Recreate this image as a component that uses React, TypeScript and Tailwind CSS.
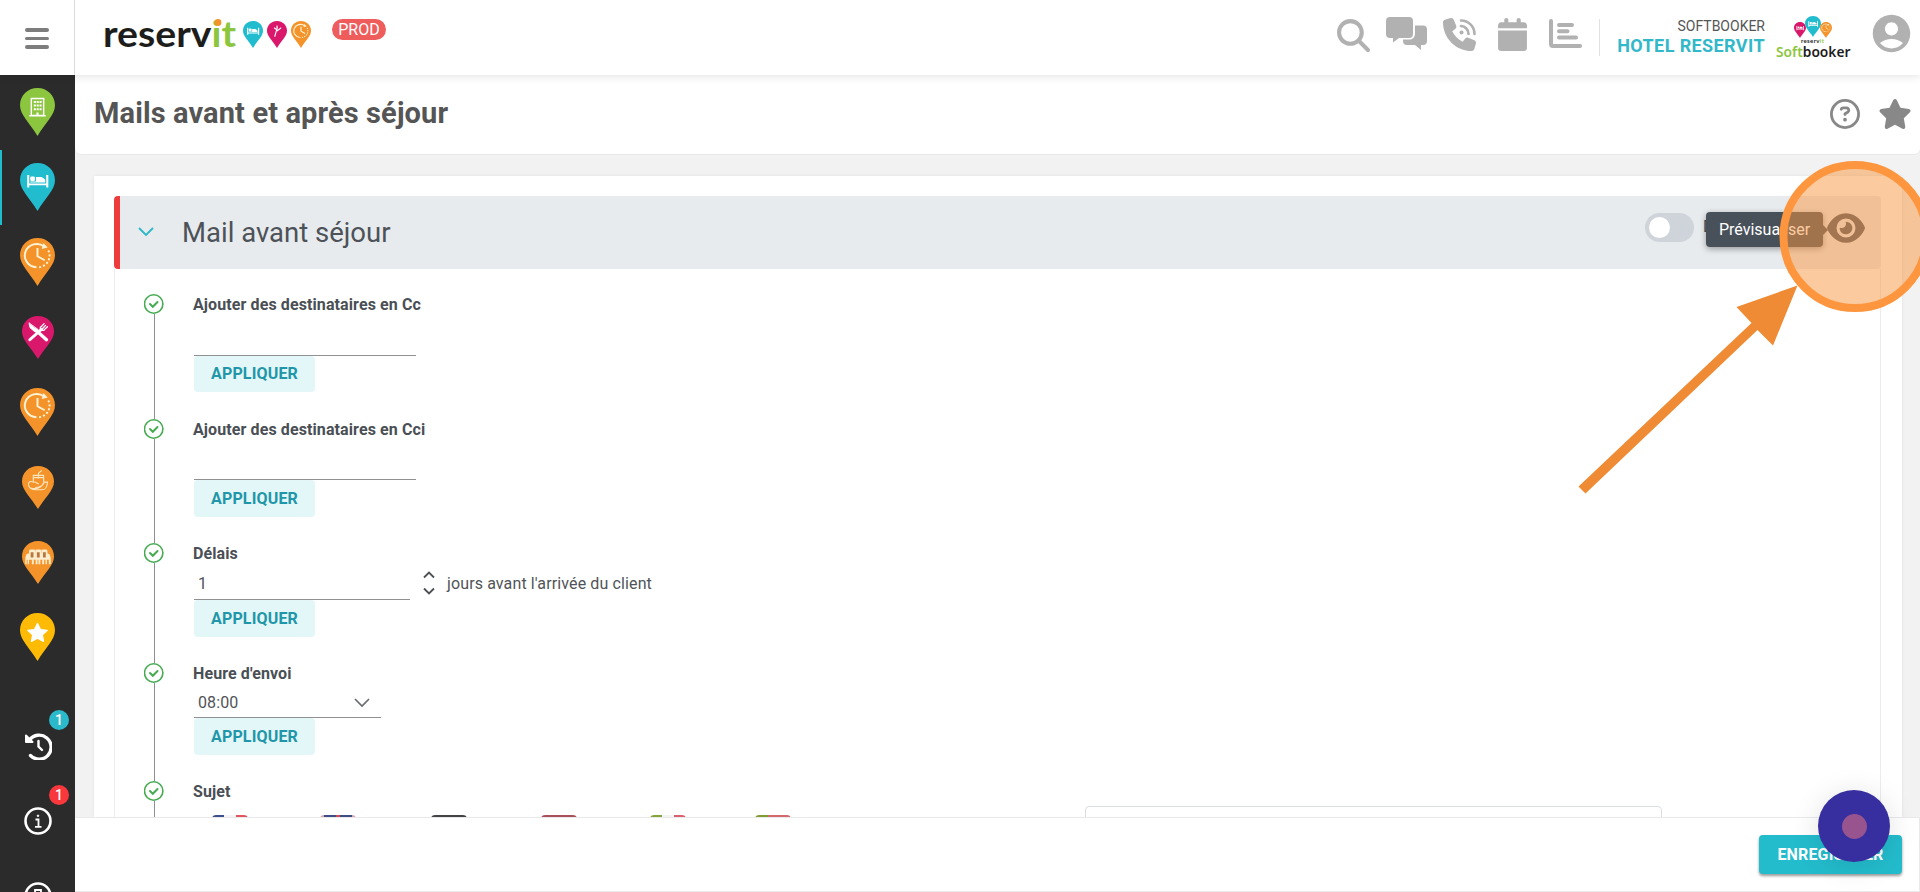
import { ReactNode } from 'react'
import { FaMagnifyingGlass, FaPhone, FaCalendar, FaRegCircleQuestion, FaStar, FaEye } from 'react-icons/fa6'
import { MdAccountCircle } from 'react-icons/md'

const TEAL = '#22bccf'
const ORANGE = '#f3932a'
const PINK = '#d9176b'

// ---------- glyphs drawn inside the pins (34 x 48 box) ----------
const Building = () => (
  <g fill="none" stroke="#fff" strokeWidth="1.4">
    <path d="M11 10.5h12v17H11zM9 27.8h16" />
    <path d="M13.4 14h2M16.2 14h2M19 14h2M13.4 17.6h2M16.2 17.6h2M19 17.6h2M13.4 21.2h2M16.2 21.2h2M19 21.2h2" strokeWidth="2" />
    <path d="M17 24.5v3" strokeWidth="2" />
  </g>
)

const Bed = () => (
  <g fill="#fff">
    <path d="M7 12h2v8.600h16.500V12h2v12.500h-2v-2.200H9v2.200H7z" />
    <rect x="10" y="13.500" width="4.500" height="4.500" rx="1.200" />
    <path d="M15.500 14h5.500l3.500 2.500v3H10v-1h5.500z" />
  </g>
)

const Clock = () => (
  <g fill="none" stroke="#fff3d6" strokeWidth="1.9">
    <path d="M16 29.200A11.600 11.600 0 1 1 23.500 8.500" />
    <path d="M23 6l3 3.200-4.200 1z" fill="#fff3d6" strokeWidth="1" />
    <path d="M27.500 12.500A11.600 11.600 0 0 1 18 29.300" strokeDasharray="2 2" />
    <path d="M17 10v8.200l7 4" />
  </g>
)

const Cutlery = () => (
  <g stroke="#fff" strokeLinecap="round" fill="none">
    <path d="M7.500 8l1 5 5.500 5 3-2.500z" fill="#fff" strokeWidth="1" />
    <path d="M15 16l11 10.500" strokeWidth="3.600" />
    <path d="M8.300 26.500L20.500 15" strokeWidth="3.200" />
    <path d="M19.500 13l4-4.500M21.500 14.500l3.500-4M23 16l4-4M19.500 12.500v3.500h4" strokeWidth="1.400" />
  </g>
)

const Breakfast = () => (
  <g fill="none" stroke="#ffe6bf" strokeWidth="1.200">
    <path d="M12 18v-7.500h11V18M12 13h11M17.500 14V8l3.500-3" />
    <path d="M12 18c-5-2.500-6 2-4.500 5s4 3.500 6.500 3.500h7c4 0 6-4 6-8.500l-3 0c-2 4-5 6-10 6M9 24.500c6 2 12 0 14-6M12 18c3-1 4 2 6 2" />
  </g>
)

const Meeting = () => (
  <g fill="#ffeccc">
    <rect x="7.500" y="9.500" width="6.500" height="7" rx="1.500" />
    <rect x="14" y="9.500" width="6.500" height="7" rx="1.500" />
    <rect x="20.500" y="9.500" width="6.500" height="7" rx="1.500" />
    <path d="M4.500 15l2-1h21l2 1 1 4v7h-2v-5h-2v5h-1.500v-5h-1.500v5h-2v-5h-2v5h-2v-5h-1v5h-2v-5h-2v5h-2v-5H7.500v5H6v-5H5v5H3.500v-7z" />
    <path d="M9.200 12.500h3v6h-3zM15.800 12.500h3v6h-3zM22.300 12.500h3v6h-3z" fill="#b5793f" />
  </g>
)

const WhiteStar = () => (
  <path
    d="M17 10.500l2.900 6 6.600.8-4.800 4.600 1.200 6.500L17 25.200l-5.900 3.200 1.200-6.500-4.800-4.600 6.600-.8z"
    fill="#fff"
    stroke="#fff"
    strokeWidth="1.200"
    strokeLinejoin="round"
  />
)

function Pin({ color, className, children }: { color: string; className: string; children?: ReactNode }) {
  return (
    <svg viewBox="0 0 34 48" preserveAspectRatio="none" className={className}>
      <path d="M17 0C7.400 0 0 7.600 0 17.200 0 27 9 34 17 48 25 34 34 27 34 17.200 34 7.600 26.600 0 17 0z" fill={color} />
      {children}
    </svg>
  )
}

const menu = [
  { color: '#8cc63f', icon: <Building />, big: true },
  { color: TEAL, icon: <Bed />, big: true, active: true },
  { color: ORANGE, icon: <Clock />, big: true },
  { color: PINK, icon: <Cutlery />, big: false },
  { color: ORANGE, icon: <Clock />, big: true },
  { color: ORANGE, icon: <Breakfast />, big: false },
  { color: ORANGE, icon: <Meeting />, big: false },
  { color: '#fdbb05', icon: <WhiteStar />, big: true },
]

function Sidebar() {
  return (
    <nav className="w-[75px] shrink-0 bg-[#2b2b2b] overflow-hidden">
      {menu.map((m, i) => (
        <div
          key={i}
          className={`h-[75px] flex justify-center border-l-2 pr-[2px] ${m.active ? 'border-[#22bccf]' : 'border-transparent'} ${m.big ? 'pt-[13px]' : 'pt-[16px]'}`}
        >
          <Pin color={m.color} className={m.big ? 'w-[35px] h-12' : 'w-8 h-[43px]'}>{m.icon}</Pin>
        </div>
      ))}

      <div className="mt-[34px] h-[75px] relative">
        <svg viewBox="0 0 28 28" className="w-7 h-7 ml-[24px] mt-[23px] absolute" fill="none" stroke="#fff" strokeWidth="3.400" strokeLinecap="round">
          <path d="M5.500 8A12 12 0 1 1 6.500 23.500" />
          <path d="M2 3.500v6.500h6.500z" fill="#fff" strokeWidth="2" strokeLinejoin="round" />
          <path d="M14.500 9v5.500l3.500 3.500" strokeWidth="2.400" />
        </svg>
        <Badge className="bg-[#2bb9cc]" />
      </div>
      <div className="h-[75px] relative">
        <svg viewBox="0 0 28 28" className="w-7 h-7 ml-[24px] mt-[23px] absolute" fill="none" stroke="#fff" strokeWidth="2.600">
          <circle cx="14" cy="14" r="12.500" />
          <path d="M11.500 12.500h3v7M11 19.800h6.500" strokeWidth="1.800" />
          <circle cx="14" cy="8.800" r=".8" fill="#fff" strokeWidth="1" />
        </svg>
        <Badge className="bg-[#f8383c]" />
      </div>
      <svg viewBox="0 0 28 28" className="w-7 h-7 ml-[24px] mt-[23px]" fill="none" stroke="#fff" strokeWidth="2.600">
        <circle cx="14" cy="14" r="12.500" />
        <path d="M11 14V8h6v6" strokeWidth="1.800" />
      </svg>
    </nav>
  )
}

function Badge({ className }: { className: string }) {
  return (
    <span className={`absolute left-[49px] top-[1px] w-5 h-5 rounded-full text-white text-[14px] font-medium flex items-center justify-center ${className}`}>1</span>
  )
}

function Header() {
  return (
    <header className="h-[75px] bg-white flex relative z-10 shadow-[0_2px_8px_rgba(0,0,0,0.1)]">
      <div className="w-[75px] border-r border-[#dcdcdc] flex flex-col items-center justify-center gap-[5px] pt-[2px] pr-px">
        <i className="w-6 h-[3.500px] rounded-full bg-[#7d7d7d]" />
        <i className="w-6 h-[3.500px] rounded-full bg-[#7d7d7d]" />
        <i className="w-6 h-[3.500px] rounded-full bg-[#7d7d7d]" />
      </div>
      <svg className="w-[139px] h-[60px] ml-[29px] mt-[4px] overflow-visible" viewBox="0 0 139 60">
        <text x="-1" y="43" textLength="133" lengthAdjust="spacingAndGlyphs" fontFamily="Lato, sans-serif" fontWeight="700" fontSize="36" fill="#1d1d1b">
          reserv<tspan fill="#8cc63f">it</tspan>
        </text>
        <circle cx="114" cy="18.500" r="3.400" fill={ORANGE} />
      </svg>
      <div className="flex gap-1 mt-[20.500px]">
        <Pin color={TEAL} className="w-5 h-[27px]"><Bed /></Pin>
        <Pin color={PINK} className="w-5 h-[27px]">
          <path d="M13 28l5-18M17 8v8l-5-4M17 18l7-6" stroke="#fff" strokeWidth="1.800" fill="none" />
        </Pin>
        <Pin color={ORANGE} className="w-5 h-[27px]"><Clock /></Pin>
      </div>
      <span className="ml-[21px] mt-[19px] w-[54px] h-[21px] rounded-full bg-[#ee5c5c] text-white text-[16px] leading-[21px] text-center">PROD</span>

      <div className="ml-auto flex text-[#b1b1b1]">
        <FaMagnifyingGlass className="w-[33px] h-[33px] mt-[19px] mr-4" />
        <svg viewBox="0 0 41 33" className="w-[41px] h-[33px] mt-[17px] mr-4" fill="currentColor">
          <path d="M4 0h19a4 4 0 0 1 4 4v13a4 4 0 0 1-4 4H13l-6 4.500V21H4a4 4 0 0 1-4-4V4a4 4 0 0 1 4-4z" />
          <path d="M29 8.500h8a4 4 0 0 1 4 4V24a4 4 0 0 1-4 4h-2v5l-6-5h-8a4 4 0 0 1-4-4v-1.500h6.500A5.500 5.500 0 0 0 29 17z" />
        </svg>
        <div className="relative w-[33px] mt-[18px] mr-[22px]">
          <FaPhone className="w-[33px] h-[33px]" />
          <svg viewBox="0 0 18 18" className="absolute left-[15px] top-[1px] w-[18px] h-[18px]" fill="none" stroke="currentColor" strokeWidth="2.600" strokeLinecap="round">
            <circle cx="3.500" cy="13.500" r="2" fill="currentColor" stroke="none" />
            <path d="M3 7a8 8 0 0 1 7.500 8M3 1.500A13.500 13.500 0 0 1 16.500 15" />
          </svg>
        </div>
        <FaCalendar className="w-[29px] h-[33px] mt-[18px] mr-[22px]" />
        <svg viewBox="0 0 33 30" className="w-[33px] h-[30px] mt-[19px] mr-[17px]" fill="none" stroke="currentColor" strokeWidth="4" strokeLinecap="round">
          <path d="M2 2v23a2 2 0 0 0 2 2h27" />
          <path d="M10 6h13M10 12.200h8.500M10 18.500h17" />
        </svg>
        <div className="w-px h-[37px] bg-[#e2e2e2] mt-[19px]" />
        <div className="w-[165px] text-right mt-[17px]">
          <p className="text-[14px] leading-[18px] text-[#555]">SOFTBOOKER</p>
          <p className="text-[18px] leading-[21px] font-bold tracking-[0.400px] whitespace-nowrap text-[#33b8c9]">HOTEL RESERVIT</p>
        </div>
        <div className="w-[76px] ml-[10px] mt-[16px] relative">
          <div className="flex justify-center items-end h-[22px] pr-px">
            <Pin color={PINK} className="w-[12px] h-4 -mr-px"><Bed /></Pin>
            <Pin color={TEAL} className="w-[16px] h-[21px] mb-px"><Bed /></Pin>
            <Pin color={ORANGE} className="w-[12px] h-4 -ml-px"><Clock /></Pin>
          </div>
          <svg viewBox="0 0 76 24" className="w-[76px] h-6 overflow-visible">
            <text x="26" y="5" textLength="23" fontFamily="Lato, sans-serif" fontWeight="700" fontSize="6" fill="#222">reserv<tspan fill="#8cc63f">it</tspan></text>
            <text x="1" y="18.800" textLength="74.500" lengthAdjust="spacingAndGlyphs" fontFamily="Noto Sans, sans-serif" fontWeight="600" fontSize="14.500" fill="#1d1d1b">
              <tspan fill="#8cc63f">Soft</tspan>booker
            </text>
          </svg>
        </div>
        <MdAccountCircle className="w-[45px] h-[45px] mt-[11px] ml-[18px] mr-[6px]" />
      </div>
    </header>
  )
}

function Step({ label, className, children }: { label: string; className: string; children?: ReactNode }) {
  return (
    <div className={`flex ${className}`}>
      <div className="w-5 mr-[30px] flex flex-col items-center">
        <svg viewBox="0 0 20 20" className="w-5 h-5 shrink-0" fill="none" stroke="#47ab52">
          <circle cx="9.700" cy="10" r="9.200" strokeWidth="1.600" />
          <path d="M6 10l2.800 2.800 4.700-4.800" strokeWidth="2" strokeLinecap="round" />
        </svg>
        <div className="w-px grow bg-[#8d9091]" />
      </div>
      <div>
        <p className="text-[16px] leading-[22px] -mb-[2px] -ml-px font-bold tracking-[0.100px] text-[#4a4f55]">{label}</p>
        {children}
      </div>
    </div>
  )
}

const Apply = ({ className = 'h-9' }: { className?: string }) => (
  <button className={`block w-[121px] rounded bg-[#e3f6f8] text-[#2196a8] text-[16px] font-bold tracking-[0.150px] ${className}`}>APPLIQUER</button>
)

function Steps() {
  return (
    <div className="grow border-x border-[#ececec] pl-[29px] pt-[25px] overflow-hidden">
      <Step label="Ajouter des destinataires en Cc" className="h-[125px]">
        <input className="block w-[222px] h-[42px] border-b border-[#8f9192] outline-none" />
        <Apply />
      </Step>
      <Step label="Ajouter des destinataires en Cci" className="h-[124px]">
        <input className="block w-[222px] h-[41px] border-b border-[#8f9192] outline-none" />
        <Apply className="h-[37px]" />
      </Step>
      <Step label="Délais" className="h-[120px]">
        <div className="flex h-[37px]">
          <div className="w-[216px] border-b border-[#8f9192] pl-[4px] pt-[9px] text-[16px] text-[#505458]">1</div>
          <svg viewBox="0 0 12 24" className="w-3 h-6 ml-[13px] mt-[8px]" fill="none" stroke="#4c5054" strokeWidth="1.800">
            <path d="M1 6.500L6 1.500l5 5M1 17.500l5 5 5-5" />
          </svg>
          <span className="ml-[12px] pt-[9px] text-[16px] tracking-[0.120px] text-[#505458]">jours avant l'arrivée du client</span>
        </div>
        <Apply className="h-[37px]" />
      </Step>
      <Step label="Heure d'envoi" className="h-[118px]">
        <div className="flex h-[35px] w-[187px] border-b border-[#8f9192] pl-[4px] pt-[8px] text-[16px] tracking-[0.100px] text-[#505458]">
          08:00
          <svg viewBox="0 0 16 10" className="w-4 h-2.5 ml-auto mr-[11px] mt-[7px]" fill="none" stroke="#666a6e" strokeWidth="1.600">
            <path d="M1 1l7 7 7-7" />
          </svg>
        </div>
        <Apply className="h-[37px]" />
      </Step>
      <Step label="Sujet" className="h-[120px]">
        <div className="flex">
          <div className="flex pl-[18px] pt-[14px] h-8 w-[891px]">
            <Flag className="mr-[72px]"><i className="w-3 bg-[#3d4f8c]" /><i className="w-3 bg-[#f4f4f4]" /><i className="w-3 bg-[#e2555d]" /></Flag>
            <Flag className="mr-[75px]"><i className="w-1 bg-[#d9a3ad]" /><i className="w-3 bg-[#3f4d85]" /><i className="w-1 bg-[#c94c5a]" /><i className="w-3 bg-[#3f4d85]" /><i className="w-1 bg-[#d9a3ad]" /></Flag>
            <Flag className="mr-[74px]"><i className="w-9 bg-[#414347]" /></Flag>
            <Flag className="mr-[73px]"><i className="w-9 bg-[#a8505c]" /></Flag>
            <Flag className="mr-[69px]"><i className="w-3 bg-[#83a53a]" /><i className="w-3 bg-[#f4f4f4]" /><i className="w-3 bg-[#d9606c]" /></Flag>
            <Flag className=""><i className="w-[13px] bg-[#7f9c35]" /><i className="w-[23px] bg-[#d3686e]" /></Flag>
          </div>
          <div className="w-[577px] h-12 mt-[5px] border border-[#dcdfe1] rounded" />
        </div>
      </Step>
    </div>
  )
}

const Flag = ({ className, children }: { className: string; children: ReactNode }) => (
  <span className={`flex w-9 h-6 rounded-sm overflow-hidden ${className}`}>{children}</span>
)

function MailPanel() {
  return (
    <section className="ml-[19px] mr-[18px] h-[641px] mt-[22px] bg-white pl-5 pr-[21px] pt-5 flex flex-col shadow-[0_0_3px_rgba(0,0,0,0.08)]">
      <div className="h-[73px] shrink-0 flex bg-[#e8ebee] border-l-[6px] border-[#ee3b3b] rounded">
        <svg viewBox="0 0 16 10" className="w-4 h-2.5 ml-[18px] mt-[31px]" fill="none" stroke="#2db6c6" strokeWidth="1.800">
          <path d="M1 1l7 7 7-7" />
        </svg>
        <h2 className="ml-[28px] mt-[18px] text-[27.500px] leading-[38px] text-[#4d5258]">Mail avant séjour</h2>
        <div className="ml-auto flex relative">
          <div className="w-[49px] h-[29px] mt-[17px] rounded-full bg-[#cfd4db] p-1">
            <div className="w-[21px] h-[21px] rounded-full bg-white" />
          </div>
          <span className="ml-[9px] mt-[19px] w-[124px] text-[16px] text-[#4d5258]">Désactivé</span>
          <FaEye className="w-[38px] h-[34px] mt-[15px] mr-[16px] text-[#4d5560]" />
          <div className="absolute left-[61px] top-[16px] w-[117px] h-[35px] rounded bg-[#48505a] text-white text-[16px] leading-[36px] text-center shadow-[0_2px_6px_rgba(0,0,0,0.35)]">
            Prévisualiser
            <i className="absolute left-full top-[13px] border-y-[5px] border-y-transparent border-l-[5px] border-l-[#48505a]" />
          </div>
        </div>
      </div>
      <Steps />
    </section>
  )
}

function Annotation() {
  return (
    <svg className="absolute left-0 top-0 w-[1920px] h-[892px] z-30 pointer-events-none" viewBox="0 0 1920 892">
      <path d="M1797.500 285.500L1736.500 307l15 16L1578.500 486.500l7 7L1757.500 330l15.500 15.500z" fill="#ee8b34" />
      <circle cx="1855" cy="236.500" r="68" fill="#fa963f" fillOpacity=".5" />
      <circle cx="1855" cy="236.500" r="71.500" fill="none" stroke="#fd963e" strokeWidth="8" />
    </svg>
  )
}

export default function App() {
  return (
    <div className="w-[1920px] h-[892px] relative overflow-hidden bg-[#f2f2f2] font-[Roboto,sans-serif] flex flex-col">
      <Header />
      <div className="flex h-[817px]">
        <Sidebar />
        <main className="grow flex flex-col">
          <div className="h-[79px] shrink-0 bg-white rounded-b-md flex text-[#888] shadow-[0_1px_1px_rgba(0,0,0,0.04)]">
            <h1 className="ml-[19px] mt-[19px] text-[29px] leading-[38px] font-bold tracking-[0.120px] text-[#555]">Mails avant et après séjour</h1>
            <FaRegCircleQuestion className="ml-auto w-[30px] h-[30px] mt-[24px] mr-[18px]" />
            <FaStar className="w-[34px] h-[30px] mt-[24px] mr-[8px]" />
          </div>
          <MailPanel />
          <footer className="h-[75px] shrink-0 bg-white border border-l-0 border-[#e9e9e9] flex justify-end pr-[17px] pt-[17px] relative z-10">
            <button className="w-[143px] h-[39px] rounded bg-[#23bccd] text-white text-[16px] font-bold tracking-[0.150px] shadow-[0_2px_3px_rgba(0,0,0,0.4)]">ENREGISTRER</button>
            <div className="absolute right-[29px] -top-[28px] w-[72px] h-[72px] rounded-full bg-[#372f9f] flex items-center justify-center shadow-[0_4px_30px_rgba(0,0,0,0.12)]">
              <div className="w-[25px] h-[25px] rounded-full bg-[#98548f]" />
            </div>
          </footer>
        </main>
      </div>
      <Annotation />
    </div>
  )
}
